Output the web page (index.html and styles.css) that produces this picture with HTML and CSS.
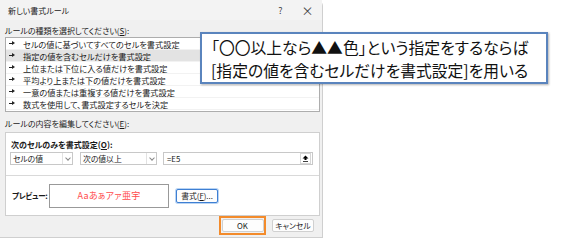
FILE: index.html
```html
<!DOCTYPE html>
<html>
<head>
	<meta http-equiv="Content-Type" content="text/html; charset=utf-8">
	<title>新しい書式ルール</title>
	<link rel="stylesheet" href="styles.css">
</head>
<body>

	<div class="dialog">
		<div class="titlebar">
			<span class="title">新しい書式ルール</span>
			<span class="tb-btn">?</span>
			<span class="tb-btn close">×</span>
		</div>

		<div class="content">
			<div class="label top">ルールの種類を選択してください(<u>S</u>):</div>

			<ul class="rules">
				<li><i class="arw"></i>セルの値に基づいてすべてのセルを書式設定</li>
				<li class="sel"><i class="arw"></i>指定の値を含むセルだけを書式設定</li>
				<li><i class="arw"></i>上位または下位に入る値だけを書式設定</li>
				<li><i class="arw"></i>平均より上または下の値だけを書式設定</li>
				<li><i class="arw"></i>一意の値または重複する値だけを書式設定</li>
				<li><i class="arw"></i>数式を使用して、書式設定するセルを決定</li>
			</ul>

			<div class="label mid">ルールの内容を編集してください(<u>E</u>):</div>

			<div class="panel">
				<div class="cond">
					<div class="bold">次のセルのみを書式設定(<u>O</u>):</div>
					<div class="fields">
						<div class="combo c1"><span>セルの値</span><b class="drop"></b></div>
						<div class="combo c2"><span>次の値以上</span><b class="drop"></b></div>
						<div class="combo c3"><span>=E5</span>
							<b class="ref"><svg width="7" height="7" viewBox="0 0 7 7"><path d="M3.5 0.5 L6.5 3.5 H4.5 V5 H2.5 V3.5 H0.5 Z M1 6 H6 V6.8 H1 Z" fill="#000"/></svg></b>
						</div>
					</div>
				</div>
				<div class="preview">
					<span class="bold plabel">プレビュー:</span>
					<div class="sample">Aaあぁアァ亜宇</div>
					<button class="btn fmt">書式(<u>F</u>)...</button>
				</div>
			</div>

			<div class="buttons">
				<span class="mark"><button class="btn ok">OK</button></span>
				<button class="btn cancel">キャンセル</button>
			</div>
		</div>
	</div>

	<div class="callout">
		<p>「〇〇以上なら▲▲色」という指定をするならば</p>
		<p>[指定の値を含むセルだけを書式設定]を用いる</p>
	</div>

</body>
</html>
```

FILE: styles.css
```css
* {padding: 0; margin: 0; box-sizing: border-box;}
body {background: #fff; width: 568px; height: 241px; overflow: hidden; position: relative; font-family: "Noto Sans CJK JP", "Noto Sans", sans-serif; font-size: 8px; color: #1a1a1a; font-feature-settings: "palt";}
u {text-decoration: underline;}

.dialog {width: 323px; height: 238px; background: #f0f0f0; border: 1px solid #cfcfcf; border-left: 0; border-top: 0; border-top-right-radius: 6px; display: flex; flex-direction: column;}
.titlebar {height: 20px; background: #f3f3f3; display: flex; align-items: center; padding: 0 0 0 8px;}
.titlebar .title {flex: 1; font-size: 8px; color: #222;}
.tb-btn {width: 27px; text-align: center; font-size: 9px; color: #444;}
.tb-btn.close {font-size: 12px; margin-right: 1px;}

.content {flex: 1; display: flex; flex-direction: column; padding: 0 2px 0 5px;}
.label {display: flex; align-items: flex-end; padding-bottom: 1px;}
.label.top {height: 17px;}
.label.mid {height: 20px; padding-bottom: 3px;}

.rules {list-style: none; height: 75px; background: #fff; border: 1px solid #adadad; padding-top: 0;}
.rules li {height: 12px; display: flex; align-items: center; padding-left: 3px; border-bottom: 1px solid #f2f2f2; font-size: 8.2px;}
.rules li.sel {background: #e3e3e3;}
.arw {display: inline-block; width: 6px; height: 5px; margin-right: 8px; background: linear-gradient(#222, #222) 0 2px / 4px 1px no-repeat; position: relative;}
.arw::after {content: ""; position: absolute; left: 3px; top: 0; border-left: 3px solid #222; border-top: 2.5px solid transparent; border-bottom: 2.5px solid transparent;}

.panel {height: 84px; background: #fff; border: 1px solid #cfcfcf; display: flex; flex-direction: column;}
.cond {height: 43px; border-bottom: 1px solid #d9d9d9; padding: 4px 6px 0 4px;}
.bold {font-weight: bold; font-size: 8px;}
.cond .bold {padding-left: 1px; height: 14px; display: flex; align-items: center;}
.fields {display: flex; margin-top: 1px;}
.combo {height: 13px; border: 1px solid #c8c8c8; display: flex; align-items: center; padding-left: 2px; font-size: 7.8px;}
.combo span {flex: 1;}
.c1 {width: 63px;}
.c2 {width: 77px; margin-left: 7px;}
.c3 {width: 150px; margin-left: 6px; padding-left: 3px;}
.drop {width: 10px; height: 11px; border-left: 1px solid #e2e2e2; position: relative;}
.drop::after {content: ""; position: absolute; left: 3px; top: 3px; width: 3px; height: 3px; border-right: 1px solid #888; border-bottom: 1px solid #888; transform: rotate(45deg);}
.ref {width: 11px; height: 11px; border: 1px solid #d6d6d6; display: flex; align-items: center; justify-content: center; margin-right: 1px;}

.preview {flex: 1; display: flex; align-items: center; padding: 0 0 0 6px;}
.plabel {width: 37px; white-space: nowrap; font-size: 7.6px; letter-spacing: -0.3px;}
.sample {width: 120px; height: 24px; border: 1px solid #999; display: flex; align-items: center; justify-content: center; color: #ff4b4b; font-size: 9px; letter-spacing: 0.3px;}

.btn {font-family: inherit; font-feature-settings: "palt"; font-size: 7.8px; color: #1a1a1a; background: #fdfdfd; border: 1px solid #d0d0d0; border-radius: 2px; display: flex; align-items: center; justify-content: center;}
.fmt {width: 42px; height: 14px; margin-left: 7px; border: 1px solid #3e7fd3; box-shadow: 0 0 0 1px #b9d4f3;}

.buttons {flex: 1; display: flex; align-items: center; justify-content: flex-end; padding-right: 6px; padding-bottom: 2px;}
.mark {width: 47px; height: 19px; border: 2px solid #f38b2b; display: flex; align-items: center; justify-content: center;}
.ok {width: 42px; height: 13px;}
.cancel {width: 42px; height: 13px; margin-left: 6px;}

.callout {position: absolute; left: 200px; top: 32px; width: 348px; height: 52px; background: #fff; border: 2px solid #5a84bd; box-shadow: 1px 1px 2px rgba(0,0,0,0.3); padding: 2px 0 0 9px; font-size: 15.8px; line-height: 23px; color: #111;}
.callout p {white-space: nowrap;}
```
